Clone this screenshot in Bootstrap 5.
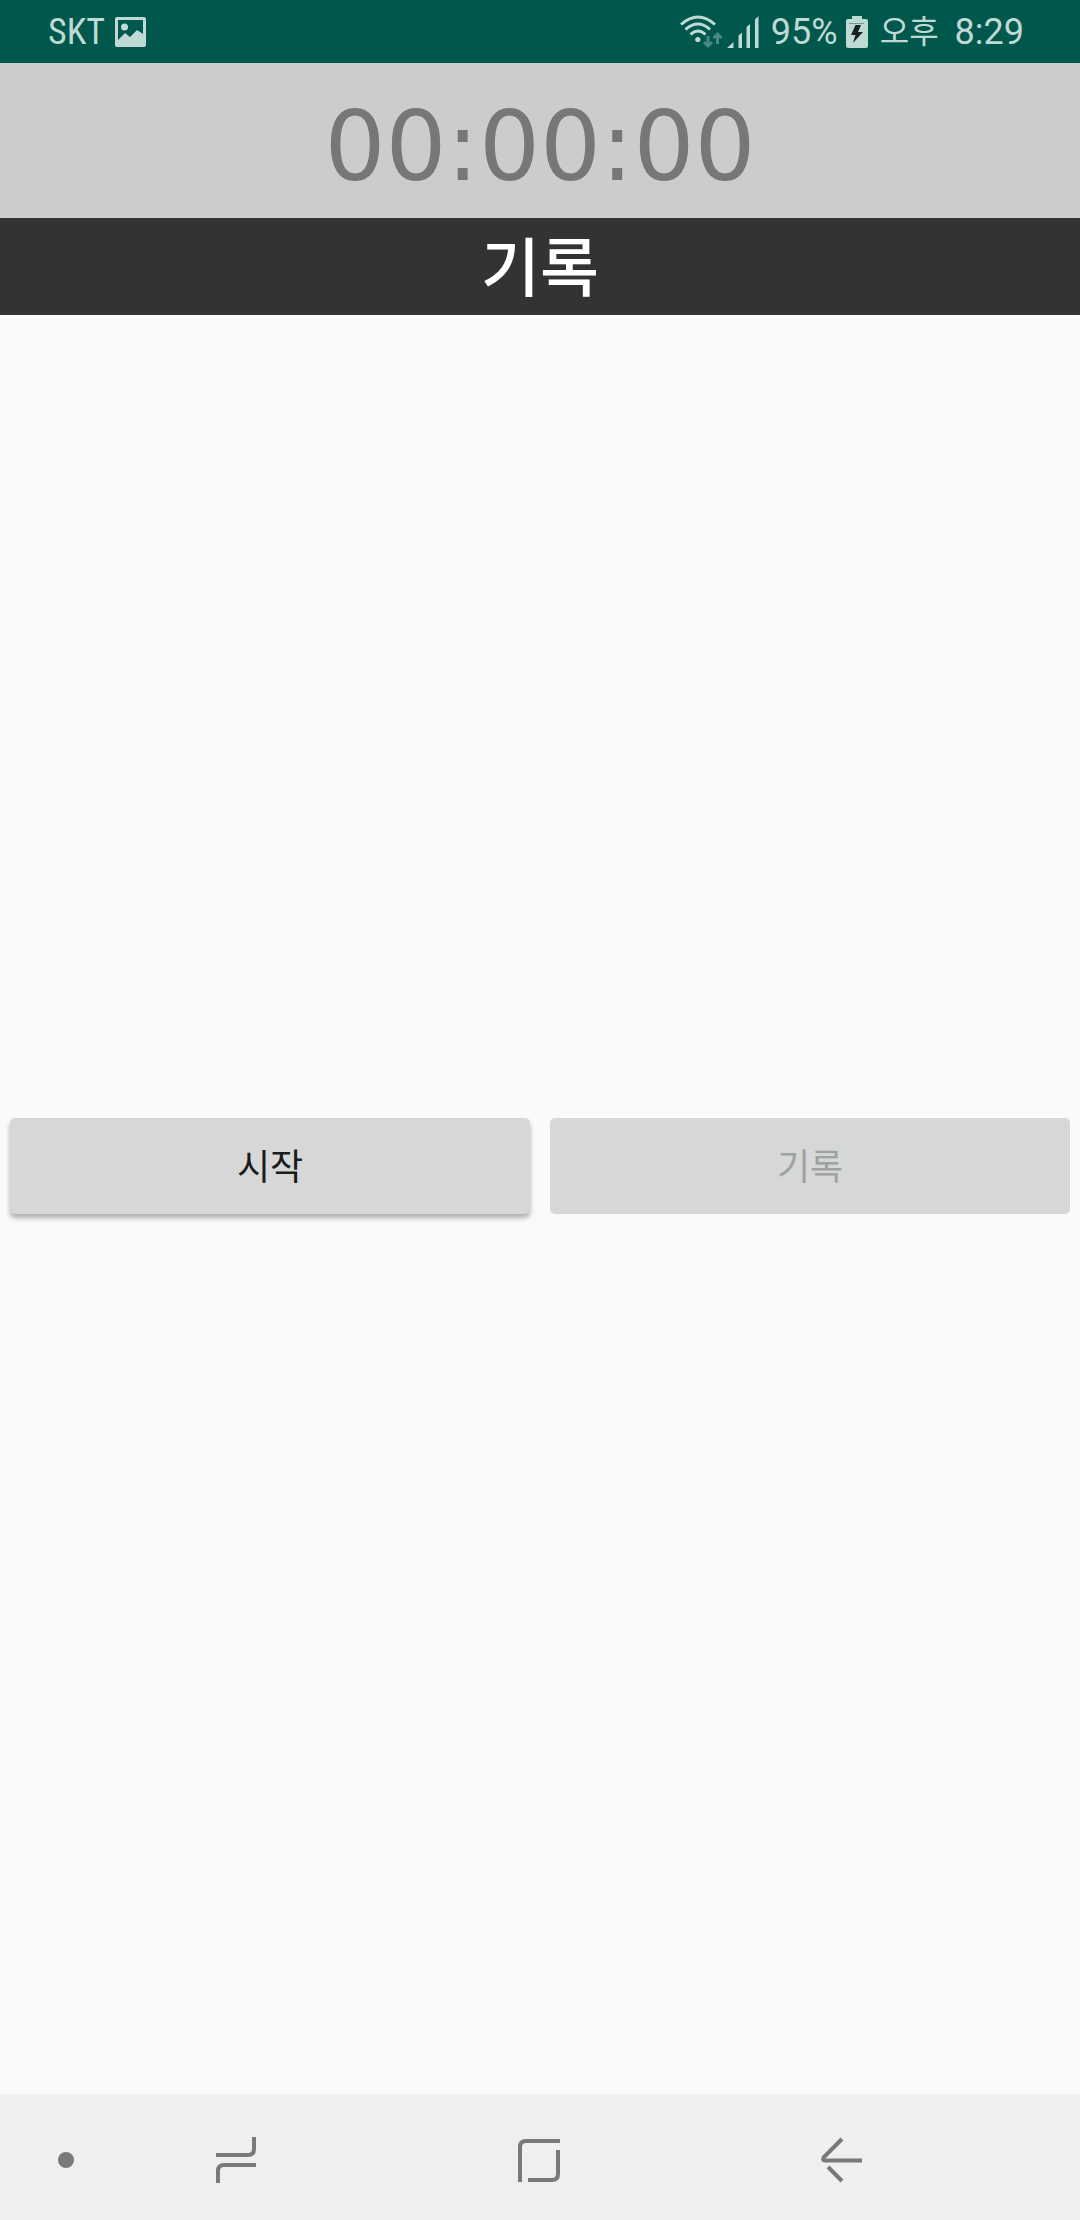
<!DOCTYPE html>
<html lang="ko">
<head>
<meta charset="utf-8">
<meta name="viewport" content="width=device-width, initial-scale=1">
<title>기록</title>
<link href="https://cdn.jsdelivr.net/npm/bootstrap@5.3.0/dist/css/bootstrap.min.css" rel="stylesheet">
<style>
  body { background: #fafafa; font-family: Roboto, "Noto Sans CJK KR", sans-serif; }
  svg { display: block; flex: none; }
  .status-bar { height: 63px; padding: 0 56px 0 48px; background: #00574b; color: #bfd9d4; font-size: 36px; line-height: 40px; }
  .carrier-group { gap: 10px; }
  .carrier { font-family: "Roboto Condensed", "Liberation Sans Narrow", Roboto, sans-serif; }
  .meridiem { font-size: 32px; }
  .timer { height: 155px; padding-top: 14px; background: #ccc; color: #777; font-family: "DejaVu Sans", sans-serif; font-size: 96px; line-height: 141px; }
  .list-title { height: 97px; padding-top: 6px; background: #333; color: #fff; font-size: 64px; font-weight: 500; line-height: 91px; }
  .record-list { flex: 31 1 0; }
  .lower-space { flex: 34 1 0; }
  .actions { padding: 10px; gap: 20px; }
  .actions .btn { --bs-btn-border-width: 0; --bs-btn-border-radius: 5px; --bs-btn-bg: #d6d8d7; --bs-btn-hover-bg: #ccc; --bs-btn-color: #1b1c1c; --bs-btn-disabled-bg: #d6d8d7; --bs-btn-disabled-color: #a0a1a1; --bs-btn-disabled-opacity: 1; height: 96px; padding-top: 10px; font-size: 36px; line-height: 40px; }
  .btn-raised { box-shadow: 0 4px 5px rgba(0, 0, 0, .3); }
  .system-nav { height: 126px; background: #efefef; color: #797979; padding-right: 8%; }
  .system-nav button { flex: 1 1 0; background: none; border: 0; color: inherit; padding: 6px 0 0; }
  .system-nav .pin-key { flex: 0 0 8.5%; padding-right: 10px; }
</style>
<script src="https://cdn.jsdelivr.net/npm/bootstrap@5.3.0/dist/js/bootstrap.bundle.min.js"></script>
</head>
<body class="d-flex flex-column min-vh-100">
<header class="status-bar d-flex align-items-center justify-content-between">
  <div class="carrier-group d-flex align-items-center">
    <span class="carrier">SKT</span>
    <svg width="31" height="30" viewBox="0 0 31 30" role="img" aria-label="사진"><path fill="currentColor" fill-rule="evenodd" d="M2 0H29Q31 0 31 2V28Q31 30 29 30H2Q0 30 0 28V2Q0 0 2 0ZM3 3V23L10 16L15 20L22 13L28 17V3Z"/><circle cx="9.500" cy="10" r="3.500" fill="currentColor"/></svg>
  </div>
  <div class="d-flex align-items-center">
    <svg class="me-1" width="43" height="34" viewBox="0 0 43 34" role="img" aria-label="Wi-Fi">
      <g fill="none" stroke="currentColor" stroke-width="3"><path d="M1 9.500Q18 -5.500 35 9.500M5.500 14.500Q18 3.500 30 14.500M10.500 19.500Q18 12.500 25.500 19.500"/></g>
      <circle cx="17.800" cy="24.500" r="2.600" fill="currentColor"/>
      <path fill="none" stroke="#4a897f" stroke-width="3" d="M28 21V31M24 27L28 31L32 27M37.500 29V19M33.500 23L37.500 19L41.500 23"/>
    </svg>
    <svg width="32" height="32" viewBox="0 0 32 32" role="img" aria-label="신호"><path fill="currentColor" d="M0 32L6.500 26V32ZM11.500 19.500L15 16.500V32H11.500ZM19.500 11L23 8V32H19.500ZM28 3.500L31.500 0V32H28Z"/></svg>
    <span class="ms-2 ps-1">95%</span>
    <svg class="ms-2" width="22" height="32" viewBox="0 0 22 32" role="img" aria-label="충전 중"><path fill="currentColor" d="M6 0H16V3H20Q22 3 22 5V30Q22 32 20 32H2Q0 32 0 30V5Q0 3 2 3H6Z"/><path stroke="#6f9b93" d="M3 7.500H18"/><path fill="#152321" d="M9.500 9H15L12 16H17L7 27L9.500 19H5Z"/></svg>
    <span class="meridiem ms-2 ps-1">오후</span>
    <span class="ms-3">8:29</span>
  </div>
</header>
<main class="d-flex flex-column flex-grow-1">
  <div class="timer text-center" role="timer">00:00:00</div>
  <h1 class="list-title text-center m-0">기록</h1>
  <section class="record-list" aria-label="기록"></section>
  <div class="actions d-flex">
    <button type="button" class="btn btn-raised flex-fill w-50">시작</button>
    <button type="button" class="btn flex-fill w-50" disabled>기록</button>
  </div>
  <div class="lower-space"></div>
</main>
<nav class="system-nav d-flex" aria-label="시스템">
  <button type="button" class="pin-key d-flex align-items-center justify-content-end" aria-label="고정"><svg width="16" height="16" viewBox="0 0 16 16"><circle cx="8" cy="8" r="8" fill="currentColor"/></svg></button>
  <button type="button" class="d-flex align-items-center justify-content-center" aria-label="최근 앱"><svg width="42" height="46" viewBox="0 0 42 46" fill="none" stroke="currentColor" stroke-width="4"><path d="M1 18H33Q39 18 39 12V0M41 28H9Q3 28 3 34V46"/></svg></button>
  <button type="button" class="d-flex align-items-center justify-content-center" aria-label="홈"><svg width="42" height="44" viewBox="0 0 42 44" fill="none" stroke="currentColor" stroke-width="4"><path d="M2 44V9Q2 3 8 3H42M40 12V36Q40 42 34 42H10"/></svg></button>
  <button type="button" class="d-flex align-items-center justify-content-center" aria-label="뒤로"><svg width="42" height="46" viewBox="0 0 42 46" fill="none" stroke="currentColor" stroke-width="4"><path d="M21 2L3 20Q1 23.500 4 23.500H41M7 30L21 44"/></svg></button>
</nav>
</body>
</html>
